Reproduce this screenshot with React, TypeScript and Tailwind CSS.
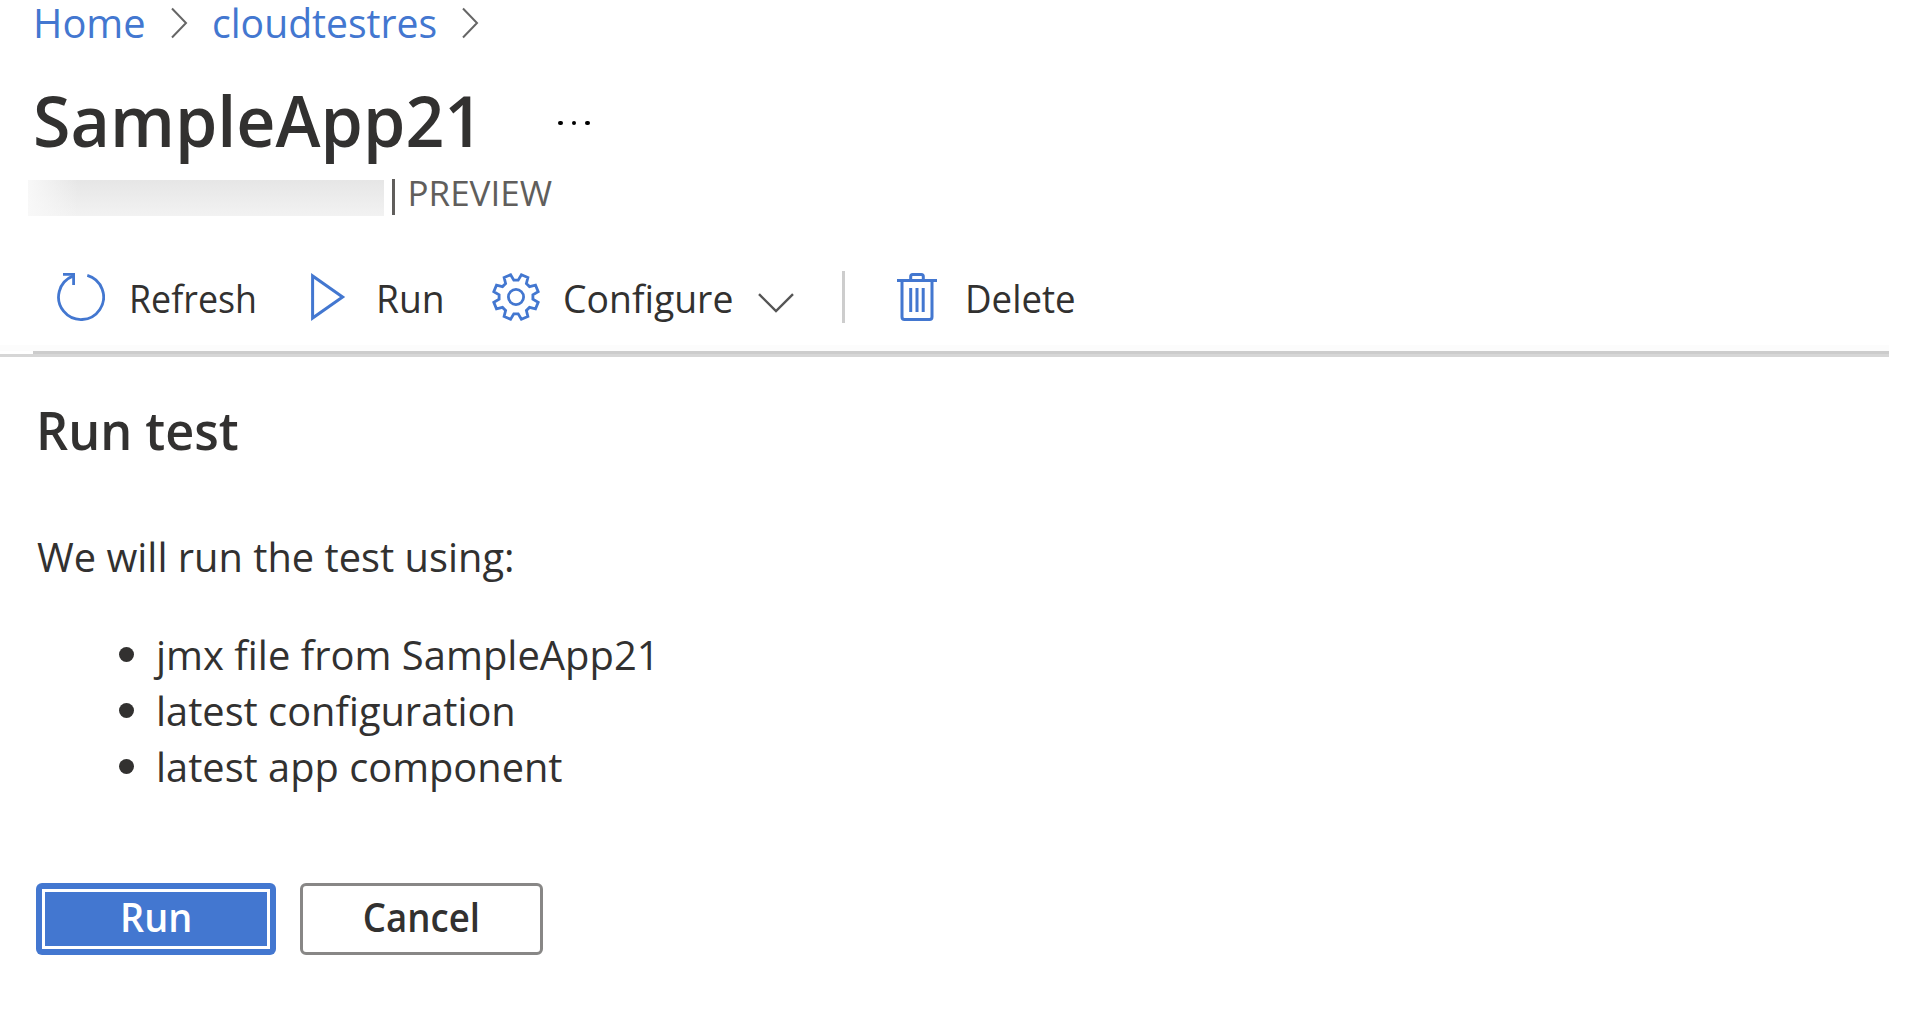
import type { ReactNode } from "react";

function BreadcrumbChevron() {
  return (
    <svg width="18" height="32" viewBox="0 0 18 32" fill="none" stroke="#666" strokeWidth="2">
      <path d="M1 1.5 L15 16 L1 30.5" />
    </svg>
  );
}

function RefreshIcon() {
  return (
    <svg width="48" height="48" viewBox="-24 -24 48 48" fill="none" stroke="#4377d0" strokeWidth="2.8">
      <path d="M6.3 -21.6 A22.5 22.5 0 1 1 -8.2 -20.9" />
      <path d="M-18 -22.6 H-7.4 V-12" />
    </svg>
  );
}

function RunIcon() {
  return (
    <svg width="35" height="48" viewBox="0 0 35 48" fill="none" stroke="#4377d0" strokeWidth="3">
      <path d="M1.6 3 V45 L31.6 24 Z" />
    </svg>
  );
}

// One eighth of the gear outline: a notch edge, the tooth's two tips, and the next notch edge.
const gearTooth: [number, number][] = [
  [2.2, -16.9],
  [5.4, -22.2],
  [11.9, -19.5],
  [10.4, -13.5],
];

const gearPath =
  Array.from({ length: 8 }, (_, i) => {
    const a = (i * Math.PI) / 4;
    return gearTooth
      .map(([x, y]) => {
        const px = x * Math.cos(a) - y * Math.sin(a);
        const py = x * Math.sin(a) + y * Math.cos(a);
        return `${px.toFixed(2)} ${py.toFixed(2)}`;
      })
      .join(" L");
  })
    .map((s, i) => (i === 0 ? `M${s}` : `L${s}`))
    .join(" ") + " Z";

function GearIcon() {
  return (
    <svg width="48" height="48" viewBox="-24 -24 48 48" fill="none" stroke="#4377d0" strokeWidth="2.8">
      <path d={gearPath} />
      <circle r="7.6" />
    </svg>
  );
}

function TrashIcon() {
  return (
    <svg width="40" height="48" viewBox="0 0 40 48" fill="none" stroke="#4377d0" strokeWidth="3">
      <path d="M0 7.5 H40" />
      <path d="M13.7 7 V3.5 Q13.7 1.5 15.7 1.5 H24.3 Q26.3 1.5 26.3 3.5 V7" />
      <path d="M5 8 V44 Q5 46.5 7.5 46.5 H32.5 Q35 46.5 35 44 V8" />
      <path d="M13.7 15 V39 M20 15 V39 M26.2 15 V39" />
    </svg>
  );
}

function DownChevron() {
  return (
    <svg width="36" height="20" viewBox="0 0 36 20" fill="none" stroke="#555" strokeWidth="2.4">
      <path d="M1 1.2 L18 18 L35 1.2" />
    </svg>
  );
}

function Bullet({ children }: { children: ReactNode }) {
  return (
    <li className="flex h-14 items-center">
      <span className="h-[15px] w-[15px] shrink-0 rounded-full bg-[#323130]" />
      <span className="ml-[21.5px]">{children}</span>
    </li>
  );
}

export default function App() {
  return (
    <div className="h-[1020px] w-full bg-white font-['Open_Sans','Noto_Sans',sans-serif] whitespace-nowrap text-[#323130]">
      <nav className="flex h-11 pl-[33px] text-[41px] leading-[44px] text-[#4377d0]">
        <a className="w-[138px] origin-left scale-x-[0.972]">Home</a>
        <span className="w-[40.6px] pt-[7px]">
          <BreadcrumbChevron />
        </span>
        <a className="w-[250.4px]">
          <span className="inline-block origin-left scale-x-[0.954]">cloudtestres</span>
        </a>
        <span className="pt-[7px]">
          <BreadcrumbChevron />
        </span>
      </nav>

      <header className="pt-[30px]">
        <div className="flex h-[92px] pl-[33px]">
          <h1 className="w-[525px] text-[70px] leading-[92px] font-semibold">
            <span className="inline-block origin-left scale-x-[0.973]">SampleApp21</span>
          </h1>
          <div className="flex gap-[9px] pt-[46.5px]">
            <i className="h-[4.5px] w-[4.5px] rounded-full bg-black" />
            <i className="h-[4.5px] w-[4.5px] rounded-full bg-black" />
            <i className="h-[4.5px] w-[4.5px] rounded-full bg-black" />
          </div>
        </div>
        <div className="mt-[5px] flex h-[45px] pl-7 text-[35px] leading-[44px] text-[#605e5c]">
          <div className="mt-[9px] h-9 w-[356px] bg-linear-to-b from-[#e6e6e6] to-[#f2f2f2]">
            <div className="h-full w-[50px] bg-linear-to-r from-[#f8f8f8] to-transparent" />
          </div>
          <div className="mt-2 ml-[8px] h-9 w-[3px] bg-[#605e5c]" />
          <span className="ml-[12.5px]">PREVIEW</span>
        </div>
      </header>

      <div className="mt-[55px] flex h-[52px] items-center pl-[57px] text-[39px] leading-[52px]">
        <div className="flex w-[254px] items-center">
          <RefreshIcon />
          <span className="mt-0.5 ml-[23.5px] inline-block origin-left scale-x-[0.918]">Refresh</span>
        </div>
        <div className="flex w-[181px] items-center">
          <RunIcon />
          <span className="mt-0.5 ml-[30px] inline-block origin-left scale-x-[0.955]">Run</span>
        </div>
        <div className="flex w-[350px] items-center">
          <GearIcon />
          <span className="mt-0.5 ml-[23.4px] inline-block w-[194.6px] origin-left scale-x-[0.958]">Configure</span>
          <span className="mt-3">
            <DownChevron />
          </span>
        </div>
        <div className="h-[52px] w-[3px] bg-[#cdcdcd]" />
        <div className="ml-[52px] flex items-center">
          <TrashIcon />
          <span className="mt-0.5 ml-[28px] inline-block origin-left scale-x-[0.939]">Delete</span>
        </div>
      </div>

      <div className="mt-[22px] w-[1889px]">
        <div className="h-1.5 bg-[#fcfcfc]" />
        <div className="ml-[33px] h-[3px] bg-[#cccccc]" />
        <div className="h-[3px] bg-[#d6d6d6]" />
      </div>

      <main>
        <h2 className="mt-[43px] ml-[35.5px] h-[60px] text-[53px] leading-[60px] font-semibold">
          <span className="inline-block origin-left scale-x-[0.951]">Run test</span>
        </h2>
        <p className="mt-[68px] ml-[36.5px] h-14 text-[41px] leading-[56px]">
          <span className="inline-block origin-left scale-x-[0.971]">We will run the test using:</span>
        </p>
        <ul className="mt-[42px] ml-[119px] text-[41px] leading-[56px]">
          <Bullet>
            <span className="inline-block origin-left scale-x-[0.974]">jmx file from SampleApp21</span>
          </Bullet>
          <Bullet>
            <span className="inline-block origin-left scale-x-[0.97]">latest configuration</span>
          </Bullet>
          <Bullet>
            <span className="inline-block origin-left scale-x-[0.97]">latest app component</span>
          </Bullet>
        </ul>
        <div className="mt-[89px] ml-9 flex gap-6 text-[39px] font-semibold">
          <button className="h-[72px] w-60 rounded-md bg-[#4377d0] p-1.5 text-white">
            <span className="flex h-full items-center justify-center border-[3px] border-white pb-1">
              <span className="scale-x-[0.971]">Run</span>
            </span>
          </button>
          <button className="flex h-[72px] w-[243px] items-center justify-center rounded-md border-[3px] border-[#888786] bg-white pb-1">
            <span className="scale-x-[0.938]">Cancel</span>
          </button>
        </div>
      </main>
    </div>
  );
}
